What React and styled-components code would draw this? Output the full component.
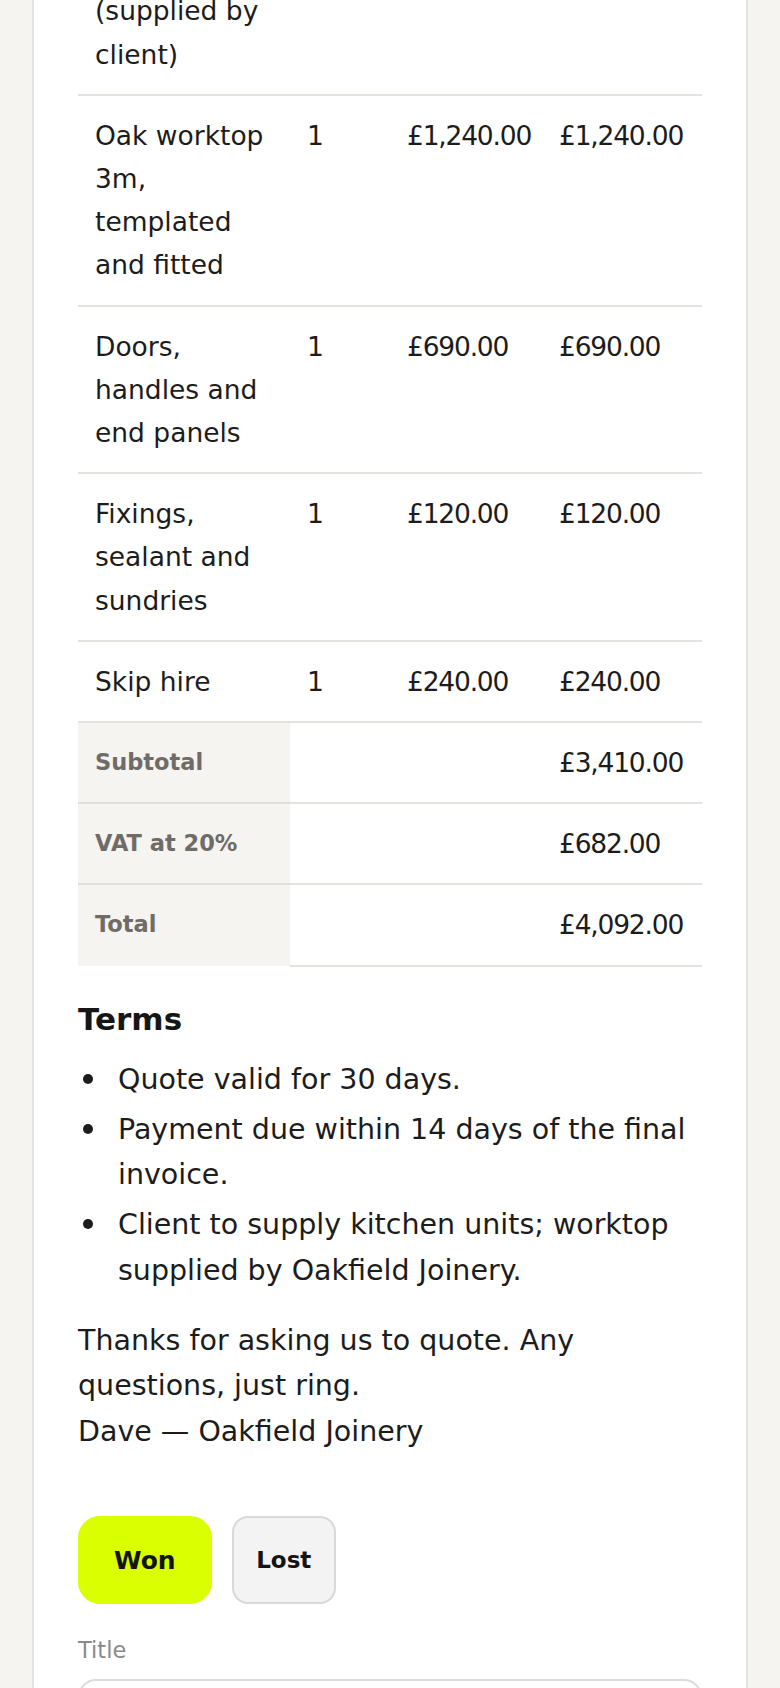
import React from "react";
import styled, { createGlobalStyle } from "styled-components";

const GlobalStyle = createGlobalStyle`
  html, body {
    margin: 0;
    padding: 0;
    overflow: hidden;
    background: #f5f4f1;
  }
  body {
    font-family: "DejaVu Sans", "Liberation Sans", sans-serif;
    color: #1c1c1c;
  }
  * { box-sizing: border-box; }
`;

const Page = styled.div`
  padding: 0 32px;
`;

const Card = styled.section`
  margin-top: -117px;
  background: #ffffff;
  border: 2px solid #e4e3e0;
  padding: 0 44px 80px;
`;

const ItemsTable = styled.table`
  width: 100%;
  border-collapse: collapse;
  table-layout: fixed;
`;

const Col = styled.col`
  width: ${(p) => p.$width}px;
`;

const Td = styled.td`
  padding: 18px 17px;
  vertical-align: top;
  text-align: left;
  font-size: 26.5px;
  line-height: 43.2px;
  color: #1c1c1c;
  border-bottom: 2px solid #e4e3e0;
  white-space: ${(p) => (p.$amount ? "nowrap" : "normal")};
  letter-spacing: ${(p) => (p.$amount ? "-1.2px" : "normal")};
`;

const TotalLabel = styled.th`
  padding: 18px 17px;
  vertical-align: top;
  text-align: left;
  font-size: 22.5px;
  font-weight: 700;
  line-height: 43.2px;
  color: #6f6b66;
  background: #f5f4f1;
  border-top: 2px solid #e0dfdc;
`;

const TermsHeading = styled.h2`
  margin: 32px 0 0;
  font-size: 31px;
  font-weight: 700;
  line-height: 40px;
  color: #161616;
`;

const TermList = styled.ul`
  margin: 18px 0 0;
  padding-left: 40px;
  list-style: none;
`;

const TermItem = styled.li`
  position: relative;
  font-size: 28.5px;
  line-height: 45.6px;
  & + & {
    margin-top: 4.5px;
  }
  &::before {
    content: "";
    position: absolute;
    left: -35px;
    top: 17px;
    width: 10px;
    height: 10px;
    border-radius: 50%;
    background: #1c1c1c;
  }
`;

const SignOff = styled.p`
  margin: 24px 0 0;
  font-size: 28.5px;
  line-height: 45.6px;
`;

const Actions = styled.div`
  display: flex;
  gap: 20px;
  margin-top: 62px;
`;

const OutcomeButton = styled.button`
  height: 88px;
  padding: 0 ${(p) => (p.$primary ? 34 : 22.5)}px;
  border-radius: ${(p) => (p.$primary ? 22 : 16)}px;
  border: 2px solid ${(p) => (p.$primary ? "#d9ff00" : "#d8d8d8")};
  background: ${(p) => (p.$primary ? "#d9ff00" : "#f3f3f3")};
  color: #141414;
  font-family: "DejaVu Sans", sans-serif;
  font-size: ${(p) => (p.$primary ? 25 : 23)}px;
  font-weight: 700;
  cursor: pointer;
`;

const Field = styled.div`
  margin-top: 29px;
  display: flex;
  flex-direction: column;
  gap: 12px;
`;

const FieldLabel = styled.label`
  font-size: 22.5px;
  line-height: 34px;
  color: #8a8a8a;
`;

const TextInput = styled.input`
  width: 100%;
  height: 84px;
  border: 2px solid #dcdcdc;
  border-radius: 18px;
  padding: 0 20px;
  font-family: "DejaVu Sans", sans-serif;
  font-size: 26px;
  background: #ffffff;
`;

const items = [
  { desc: "Fit kitchen units (supplied by client)", qty: "1", unit: "£1,120.00", total: "£1,120.00" },
  { desc: "Oak worktop 3m, templated and fitted", qty: "1", unit: "£1,240.00", total: "£1,240.00" },
  { desc: "Doors, handles and end panels", qty: "1", unit: "£690.00", total: "£690.00" },
  { desc: "Fixings, sealant and sundries", qty: "1", unit: "£120.00", total: "£120.00" },
  { desc: "Skip hire", qty: "1", unit: "£240.00", total: "£240.00" },
];

const totals = [
  { label: "Subtotal", value: "£3,410.00" },
  { label: "VAT at 20%", value: "£682.00" },
  { label: "Total", value: "£4,092.00" },
];

const terms = [
  "Quote valid for 30 days.",
  "Payment due within 14 days of the final invoice.",
  "Client to supply kitchen units; worktop supplied by Oakfield Joinery.",
];

export default function App() {
  return (
    <>
      <GlobalStyle />
      <Page>
        <Card>
          <ItemsTable>
            <colgroup>
              <Col $width={212} />
              <Col $width={100} />
              <Col $width={152} />
              <Col $width={160} />
            </colgroup>
            <tbody>
              {items.map((it) => (
                <tr key={it.desc}>
                  <Td>{it.desc}</Td>
                  <Td>{it.qty}</Td>
                  <Td $amount>{it.unit}</Td>
                  <Td $amount>{it.total}</Td>
                </tr>
              ))}
              {totals.map((t) => (
                <tr key={t.label}>
                  <TotalLabel scope="row">{t.label}</TotalLabel>
                  <Td colSpan={2} />
                  <Td $amount>{t.value}</Td>
                </tr>
              ))}
            </tbody>
          </ItemsTable>

          <TermsHeading>Terms</TermsHeading>
          <TermList>
            {terms.map((t) => (
              <TermItem key={t}>{t}</TermItem>
            ))}
          </TermList>
          <SignOff>
            Thanks for asking us to quote. Any questions, just ring.
            <br />
            Dave — Oakfield Joinery
          </SignOff>

          <Actions>
            <OutcomeButton $primary>Won</OutcomeButton>
            <OutcomeButton>Lost</OutcomeButton>
          </Actions>

          <Field>
            <FieldLabel htmlFor="title">Title</FieldLabel>
            <TextInput id="title" type="text" />
          </Field>
        </Card>
      </Page>
    </>
  );
}
